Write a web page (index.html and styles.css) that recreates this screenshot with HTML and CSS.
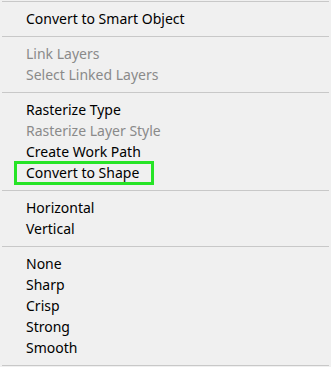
FILE: index.html
```html
<!DOCTYPE html>
<html>
<head>
<meta charset="utf-8">
<link rel="stylesheet" href="styles.css">
</head>
<body>
<div class="menu">
  <div class="section">
    <div class="item">Convert to Smart Object</div>
  </div>
  <div class="section">
    <div class="item disabled">Link Layers</div>
    <div class="item disabled">Select Linked Layers</div>
  </div>
  <div class="section">
    <div class="item">Rasterize Type</div>
    <div class="item disabled">Rasterize Layer Style</div>
    <div class="item">Create Work Path</div>
    <div class="item"><span class="highlight">Convert to Shape</span></div>
  </div>
  <div class="section">
    <div class="item">Horizontal</div>
    <div class="item">Vertical</div>
  </div>
  <div class="section">
    <div class="item">None</div>
    <div class="item">Sharp</div>
    <div class="item">Crisp</div>
    <div class="item">Strong</div>
    <div class="item">Smooth</div>
  </div>
</div>
</body>
</html>
```
FILE: styles.css
```css
html, body {
  margin: 0;
  padding: 0;
  background: #f0f0f0;
}
body {
  width: 331px;
  height: 367px;
  overflow: hidden;
  font-family: "Noto Sans", "Open Sans", sans-serif;
  font-size: 14px;
  color: #000;
}
.menu {
  margin-top: 1px;
  border-top: 1px solid #c8c8c8;
  margin-left: 2px;
  margin-right: 2px;
}
.section {
  padding: 6px 0 7px 0;
  border-bottom: 1px solid #c8c8c8;
}
.item {
  height: 21px;
  line-height: 21px;
  padding-left: 24px;
  white-space: nowrap;
}
.disabled {
  color: #8a8a8a;
}
.highlight {
  display: inline-block;
  height: 18px;
  line-height: 18px;
  margin-left: -9px;
  padding: 0 12px 0 9px;
  outline: 3px solid #27e427;
  vertical-align: top;
  margin-top: 2px;
}
```
